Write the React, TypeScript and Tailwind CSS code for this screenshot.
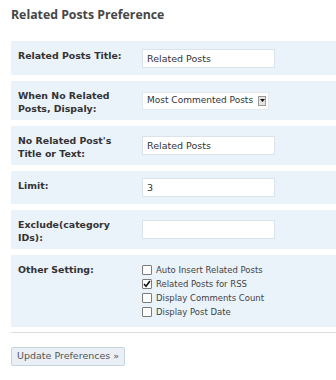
import { Fragment } from 'react'

type Row = {
  label: string
  height: string
  kind: 'text' | 'select' | 'checks'
  value?: string
}

const rows: Row[] = [
  { label: 'Related Posts Title:', height: 'h-[34px]', kind: 'text', value: 'Related Posts' },
  { label: 'When No Related Posts, Dispaly:', height: 'h-[39px]', kind: 'select', value: 'Most Commented Posts' },
  { label: "No Related Post's Title or Text:", height: 'h-[39px]', kind: 'text', value: 'Related Posts' },
  { label: 'Limit:', height: 'h-[33px]', kind: 'text', value: '3' },
  { label: 'Exclude(category IDs):', height: 'h-[39px]', kind: 'text', value: '' },
  { label: 'Other Setting:', height: 'h-[72px]', kind: 'checks' },
]

const checks = [
  { text: 'Auto Insert Related Posts', checked: false },
  { text: 'Related Posts for RSS', checked: true },
  { text: 'Display Comments Count', checked: false },
  { text: 'Display Post Date', checked: false },
]

function TextField({ value }: { value: string }) {
  return (
    <input
      type="text"
      readOnly
      value={value}
      className="w-[133px] h-[19px] border border-[#dbe3ec] bg-white px-[4px] text-[9.5px] text-[#333] font-['Verdana','DejaVu_Sans',sans-serif] outline-none"
    />
  )
}

function SelectField({ value }: { value: string }) {
  return (
    <div className="w-[127px] h-[18px] flex items-center border border-[#e3e8ee] bg-white pl-[4px] pr-[2px]">
      <span className="flex-1 text-[9px] text-[#333] font-['Verdana','DejaVu_Sans',sans-serif] whitespace-nowrap">
        {value}
      </span>
      <span className="w-[8px] h-[10px] flex items-center justify-center bg-[#e4e4e4] border border-[#9a9a9a]">
        <svg width="5" height="3" viewBox="0 0 5 3">
          <path d="M0 0h5L2.5 3z" fill="#111" />
        </svg>
      </span>
    </div>
  )
}

function CheckBox({ checked }: { checked: boolean }) {
  return (
    <span className="w-[10px] h-[10px] shrink-0 flex items-center justify-center border border-[#7c7c7c] rounded-[1px] bg-white">
      {checked && (
        <svg width="8" height="8" viewBox="0 0 8 8">
          <path d="M1 4l2 2.2L7 1" stroke="#111" strokeWidth="1.6" fill="none" />
        </svg>
      )}
    </span>
  )
}

export default function App() {
  return (
    <div className="w-[336px] h-[380px] bg-white px-[11px] pt-[6px] font-['Verdana','DejaVu_Sans',sans-serif] overflow-hidden">
      <h2 className="font-['Open_Sans',sans-serif] font-bold text-[12.3px] leading-[17px] text-[#464646] -mr-[11px]">
        Related Posts Preference
      </h2>

      <div className="mt-[18px] -mr-[11px] flex flex-col gap-[6px]">
        {rows.map((row) => (
          <div key={row.label} className={`flex items-center bg-[#eaf2fa] pl-[7px] ${row.height}`}>
            <div className="self-start w-[124px] shrink-0 pt-[8px] pr-[14px] text-[9.4px] font-bold leading-[13px] text-[#333]">
              {row.label}
            </div>
            {row.kind === 'text' && <TextField value={row.value ?? ''} />}
            {row.kind === 'select' && <SelectField value={row.value ?? ''} />}
            {row.kind === 'checks' && (
              <div className="flex flex-col">
                {checks.map((c) => (
                  <Fragment key={c.text}>
                    <label className="flex items-center gap-[4px] h-[14px] text-[8.5px] text-[#444]">
                      <CheckBox checked={c.checked} />
                      {c.text}
                    </label>
                  </Fragment>
                ))}
              </div>
            )}
          </div>
        ))}
      </div>

      <div className="mt-[5px] -mr-[11px] h-px bg-[#dddddd]" />

      <button className="mt-[14px] h-[19px] px-[5px] border border-[#c6d4e0] rounded-[2px] bg-[#e9eff5] text-[9.5px] text-[#555] font-['Verdana','DejaVu_Sans',sans-serif]">
        Update Preferences »
      </button>
    </div>
  )
}
